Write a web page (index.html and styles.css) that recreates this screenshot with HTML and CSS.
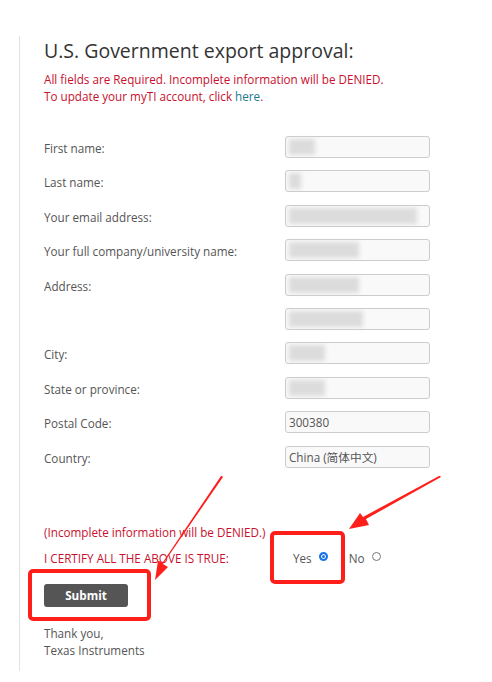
FILE: index.html
```html
<!DOCTYPE html>
<html lang="en">
<head>
    <meta charset="UTF-8">
    <title>U.S. Government export approval</title>
    <link rel="stylesheet" href="styles.css">
</head>
<body>
    <div class="page">
        <h1>U.S. Government export approval:</h1>
        <p class="notice">All fields are Required. Incomplete information will be DENIED.<br>
            To update your myTI account, click <a href="#">here</a>.</p>

        <div class="form">
            <div class="row">
                <span class="label">First name:</span>
                <div class="field"><span class="blur" style="width:26px"></span></div>
            </div>
            <div class="row">
                <span class="label">Last name:</span>
                <div class="field"><span class="blur" style="width:12px"></span></div>
            </div>
            <div class="row">
                <span class="label">Your email address:</span>
                <div class="field"><span class="blur" style="width:128px"></span></div>
            </div>
            <div class="row">
                <span class="label">Your full company/university name:</span>
                <div class="field"><span class="blur" style="width:70px"></span></div>
            </div>
            <div class="row">
                <span class="label">Address:</span>
                <div class="field"><span class="blur" style="width:70px"></span></div>
            </div>
            <div class="row">
                <span class="label"></span>
                <div class="field"><span class="blur" style="width:74px"></span></div>
            </div>
            <div class="row">
                <span class="label">City:</span>
                <div class="field"><span class="blur" style="width:36px"></span></div>
            </div>
            <div class="row">
                <span class="label">State or province:</span>
                <div class="field"><span class="blur" style="width:36px"></span></div>
            </div>
            <div class="row">
                <span class="label">Postal Code:</span>
                <div class="field">300380</div>
            </div>
            <div class="row">
                <span class="label">Country:</span>
                <div class="field">China (简体中文)</div>
            </div>
        </div>

        <p class="warn">(Incomplete information will be DENIED.)</p>
        <div class="certify">
            <span class="warn">I CERTIFY ALL THE ABOVE IS TRUE:</span>
            <label class="choice">Yes <span class="radio checked"></span></label>
            <label class="choice">No <span class="radio"></span></label>
        </div>
        <button class="submit">Submit</button>
        <p class="thanks">Thank you,<br>Texas Instruments</p>
    </div>

    <svg class="marks" width="492" height="682" viewBox="0 0 492 682">
        <rect x="30" y="571" width="119" height="48" rx="3" fill="none" stroke="#ff1f1a" stroke-width="4"/>
        <rect x="272" y="533" width="71" height="49" rx="3" fill="none" stroke="#ff1f1a" stroke-width="4"/>
        <polygon points="222,476 223,477 163,564 168,567 155,580 158,561 163,562 221,476" fill="#ff1f1a"/>
        <polygon points="440,476 441,477 366,519 369,525 349,529 360,513 363,517 439,476" fill="#ff1f1a"/>
    </svg>
</body>
</html>
```

FILE: styles.css
```css
body {
    margin: 0;
    font-family: "Open Sans", "Noto Sans CJK SC", sans-serif;
    background-color: #fff;
    color: #555;
}
.page {
    margin: 36px 0 0 19px;
    padding: 0 0 12px 24px;
    border-left: 1px solid #e2e2e2;
    width: 420px;
}
h1 {
    margin: 0;
    padding-top: 1px;
    font-size: 19.5px;
    font-weight: 400;
    color: #333;
    line-height: 27px;
}
.notice {
    margin: 7px 0 0;
    font-size: 11.7px;
    line-height: 17px;
    color: #c8102e;
}
.notice a {
    color: #1b7a8c;
    text-decoration: none;
}
.form {
    margin-top: 31px;
    display: flex;
    flex-direction: column;
    gap: 12.4px;
}
.row {
    display: flex;
    align-items: center;
    height: 22px;
}
.label {
    width: 241px;
    font-size: 11.7px;
    padding-top: 2px;
}
.field {
    box-sizing: border-box;
    width: 145px;
    height: 22px;
    border: 1px solid #ccc;
    border-radius: 3px;
    background-color: #f9f9f9;
    padding: 0 3px;
    display: flex;
    align-items: center;
    font-size: 11.7px;
    color: #555;
}
.blur {
    height: 16px;
    background-color: #dcdcdc;
    filter: blur(2px);
}
.warn {
    color: #c8102e;
    font-size: 11.7px;
}
p.warn {
    margin: 56px 0 0;
    line-height: 17px;
}
.certify {
    margin-top: 9px;
    display: flex;
    align-items: center;
    height: 17px;
}
.certify .warn {
    width: 249px;
}
.choice {
    font-size: 11.7px;
    display: flex;
    align-items: center;
    gap: 7px;
    margin-right: 21px;
}
.radio {
    box-sizing: border-box;
    width: 9px;
    height: 9px;
    border: 1px solid #777;
    border-radius: 50%;
    margin-top: -3px;
}
.radio.checked {
    border: 2px solid #1a73e8;
    background-color: #1a73e8;
    box-shadow: inset 0 0 0 1px #fff;
}
.submit {
    margin-top: 17px;
    width: 84px;
    height: 23px;
    border: none;
    border-radius: 3px;
    background-color: #555;
    color: #fff;
    font-family: inherit;
    font-weight: 700;
    font-size: 11.7px;
}
.thanks {
    margin: 18px 0 0;
    font-size: 11.7px;
    line-height: 17px;
}
.marks {
    position: absolute;
    top: 0;
    left: 0;
    pointer-events: none;
}
```
